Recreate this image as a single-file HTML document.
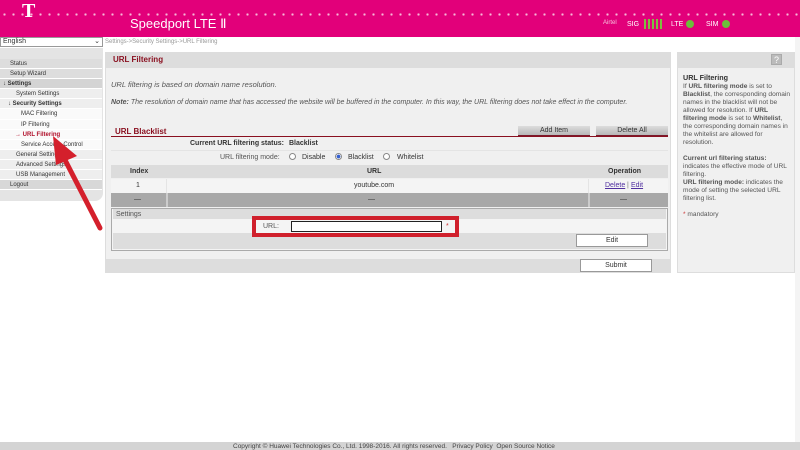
<!DOCTYPE html>
<html><head><meta charset="utf-8"><style>
*{margin:0;padding:0;box-sizing:border-box}
body{width:800px;height:450px;overflow:hidden;background:#fff;font-family:"Liberation Sans",sans-serif;font-size:7px;color:#333;position:relative}
.a{position:absolute}
.hdr{left:0;top:0;width:800px;height:37px;background:#e2007a}
.dots{left:0;top:13px;width:800px;height:3px;background-image:radial-gradient(circle,#f7b8d8 1px,transparent 1.3px);background-size:9px 3px}
.menu div{height:10.1px;line-height:10.1px;border-bottom:1px solid #fff;white-space:nowrap}
.btn{background:linear-gradient(#ddd,#b8b8b8);border-bottom:1px solid #7a1a2a;text-align:center;height:10px;line-height:10px;color:#333}
.wb{background:#fff;border:1px solid #999;text-align:center;height:13px;line-height:12px}
</style></head><body>
<div class="a hdr"></div>
<div class="a dots"></div>
<div class="a" style="left:22px;top:0;color:#fff;font-size:20px;font-family:'Liberation Serif',serif;font-weight:bold">T</div>
<div class="a" style="left:130px;top:16px;color:#fff;font-size:13px">Speedport LTE Ⅱ</div>
<div class="a" style="left:603px;top:20px;color:#f5c0dc;font-size:6px">Airtel</div>
<div class="a" style="left:627px;top:21px;color:#fff;font-size:7px">SIG</div>
<div class="a" style="left:644px;top:19px;width:20px;height:10px;background:repeating-linear-gradient(90deg,#7cc040 0 2px,transparent 2px 4px)"></div>
<div class="a" style="left:671px;top:21px;color:#fff;font-size:7px">LTE</div>
<div class="a" style="left:686px;top:20px;width:8px;height:8px;border-radius:50%;background:#6cbf3a"></div>
<div class="a" style="left:706px;top:21px;color:#fff;font-size:7px">SIM</div>
<div class="a" style="left:722px;top:20px;width:8px;height:8px;border-radius:50%;background:#6cbf3a"></div>

<div class="a" style="left:0;top:37px;width:103px;height:10px;border:1px solid #999;background:#fff;font-size:7px;line-height:8px;padding-left:2px">English<span style="float:right;margin-right:2px">⌄</span></div>
<div class="a" style="left:105px;top:39px;color:#999;font-size:6px">Settings-&gt;Security Settings-&gt;URL Filtering</div>

<div class="a" style="left:0;top:48px;width:103px;height:153px;background:#e4e4e4;border-radius:0 0 8px 0"></div>
<div class="a menu" style="left:0;top:59px;width:102px;font-size:6px;color:#333">
<div style="padding-left:10px;background:#ddd">Status</div>
<div style="padding-left:10px;background:#ddd">Setup Wizard</div>
<div style="padding-left:3px;background:#d4d4d4;font-weight:bold">↓ Settings</div>
<div style="padding-left:16px;background:#eee">System Settings</div>
<div style="padding-left:8px;background:#eee;font-weight:bold">↓ Security Settings</div>
<div style="padding-left:21px;background:#fafafa">MAC Filtering</div>
<div style="padding-left:21px;background:#fafafa">IP Filtering</div>
<div style="padding-left:15px;background:#fafafa;color:#b0102a;font-weight:bold">→ URL Filtering</div>
<div style="padding-left:21px;background:#fafafa">Service Access Control</div>
<div style="padding-left:16px;background:#eee">General Settings</div>
<div style="padding-left:16px;background:#eee">Advanced Settings</div>
<div style="padding-left:16px;background:#eee">USB Management</div>
<div style="padding-left:10px;background:#d8d8d8">Logout</div>
</div>

<div class="a" style="left:105px;top:52px;width:566px;height:221px;background:#f0f0f0;border:1px solid #ddd"></div>
<div class="a" style="left:105px;top:52px;width:566px;height:16px;background:#ddd"></div>
<div class="a" style="left:113px;top:55px;color:#8a1020;font-weight:bold;font-size:8px">URL Filtering</div>
<div class="a" style="left:111px;top:80px;font-style:italic;font-size:7.5px;color:#555">URL filtering is based on domain name resolution.</div>
<div class="a" style="left:111px;top:98px;width:555px;font-style:italic;font-size:7px;color:#555;line-height:9px"><b>Note:</b> The resolution of domain name that has accessed the website will be buffered in the computer. In this way, the URL filtering does not take effect in the computer.</div>
<div class="a" style="left:115px;top:127px;color:#8a1020;font-weight:bold;font-size:8px">URL Blacklist</div>
<div class="a" style="left:111px;top:136px;width:557px;height:1px;background:#8a1020"></div>
<div class="a btn" style="left:518px;top:126px;width:72px">Add Item</div>
<div class="a btn" style="left:596px;top:126px;width:72px">Delete All</div>
<div class="a" style="left:190px;top:140px;font-weight:bold">Current URL filtering status:</div>
<div class="a" style="left:289px;top:140px;font-weight:bold">Blacklist</div>
<div class="a" style="left:111px;top:150px;width:557px;height:1px;background:#e4e4e4"></div>
<div class="a" style="left:220px;top:154px;color:#555">URL filtering mode:</div>
<div class="a" style="left:289px;top:153px;width:7px;height:7px;border:1px solid #888;border-radius:50%;background:#fff"></div>
<div class="a" style="left:302px;top:154px">Disable</div>
<div class="a" style="left:335px;top:153px;width:7px;height:7px;border:1px solid #888;border-radius:50%;background:radial-gradient(#3560d0 1.7px,#fff 2px)"></div>
<div class="a" style="left:348px;top:154px">Blacklist</div>
<div class="a" style="left:383px;top:153px;width:7px;height:7px;border:1px solid #888;border-radius:50%;background:#fff"></div>
<div class="a" style="left:397px;top:154px">Whitelist</div>

<div class="a" style="left:111px;top:165px;width:557px;height:13px;background:#dcdcdc"></div>
<div class="a" style="left:130px;top:168px;font-weight:bold">Index</div>
<div class="a" style="left:367px;top:168px;font-weight:bold">URL</div>
<div class="a" style="left:608px;top:168px;font-weight:bold">Operation</div>
<div class="a" style="left:111px;top:179px;width:557px;height:14px;background:#f4f4f4"></div>
<div class="a" style="left:166px;top:179px;width:1px;height:28px;background:#e4e4e4"></div>
<div class="a" style="left:588px;top:179px;width:1px;height:28px;background:#e4e4e4"></div>
<div class="a" style="left:136px;top:182px">1</div>
<div class="a" style="left:354px;top:182px">youtube.com</div>
<div class="a" style="left:605px;top:182px;color:#5030a0;text-decoration:underline">Delete</div>
<div class="a" style="left:627px;top:182px;color:#777">|</div>
<div class="a" style="left:631px;top:182px;color:#5030a0;text-decoration:underline">Edit</div>
<div class="a" style="left:111px;top:193px;width:557px;height:14px;background:#a8a8a8"></div>
<div class="a" style="left:166px;top:193px;width:2px;height:14px;background:#ccc"></div>
<div class="a" style="left:588px;top:193px;width:2px;height:14px;background:#ccc"></div>
<div class="a" style="left:134px;top:196px">—</div>
<div class="a" style="left:368px;top:196px">—</div>
<div class="a" style="left:620px;top:196px">—</div>

<div class="a" style="left:111px;top:208px;width:557px;height:43px;border:1px solid #aaa;background:#f4f4f4"></div>
<div class="a" style="left:113px;top:209px;width:553px;height:10px;background:#ddd"></div>
<div class="a" style="left:116px;top:211px;color:#555">Settings</div>
<div class="a" style="left:113px;top:233px;width:553px;height:16px;background:#ddd"></div>
<div class="a wb" style="left:576px;top:234px;width:72px">Edit</div>
<div class="a" style="left:252px;top:216px;width:207px;height:21px;border:4px solid #d0202c;background:#f4f4f4"></div>
<div class="a" style="left:263px;top:223px;color:#555">URL:</div>
<div class="a" style="left:291px;top:221px;width:151px;height:11px;border:1.5px solid #222;background:#fff"></div>
<div class="a" style="left:446px;top:223px;color:#c33">*</div>

<div class="a" style="left:105px;top:259px;width:566px;height:14px;background:#ddd"></div>
<div class="a wb" style="left:580px;top:259px;width:72px">Submit</div>

<div class="a" style="left:677px;top:52px;width:118px;height:221px;background:#f0f0f0;border:1px solid #ddd"></div>
<div class="a" style="left:677px;top:52px;width:118px;height:16px;background:#ddd"></div>
<div class="a" style="left:771px;top:54px;width:11px;height:11px;background:#bbb;color:#fff;text-align:center;font-size:9px;line-height:11px;border:1px solid #aaa">?</div>
<div class="a" style="left:683px;top:74px;width:110px;font-size:6.6px;line-height:8px;color:#555">
<b style="color:#333;font-size:7.2px">URL Filtering</b><br>If <b>URL filtering mode</b> is set to <b>Blacklist</b>, the corresponding domain names in the blacklist will not be allowed for resolution. If <b>URL filtering mode</b> is set to <b>Whitelist</b>, the corresponding domain names in the whitelist are allowed for resolution.<br><br><b>Current url filtering status:</b> indicates the effective mode of URL filtering.<br><b>URL filtering mode:</b> indicates the mode of setting the selected URL filtering list.<br><br><span style="color:#c33">*</span> mandatory</div>

<div class="a" style="left:795px;top:37px;width:5px;height:405px;background:#f4f4f4"></div>
<div class="a" style="left:0;top:442px;width:800px;height:8px;background:#d4d4d4"></div>
<div class="a" style="left:233px;top:443px;font-size:6.5px;color:#444">Copyright © Huawei Technologies Co., Ltd. 1998-2016. All rights reserved.&nbsp;&nbsp; Privacy Policy&nbsp; Open Source Notice</div>

<svg class="a" style="left:0;top:0" width="800" height="450"><line x1="100" y1="228" x2="64" y2="158" stroke="#d4202c" stroke-width="5" stroke-linecap="round"/><polygon points="53,136 77,156 56,165" fill="#d4202c"/></svg>
</body></html>
